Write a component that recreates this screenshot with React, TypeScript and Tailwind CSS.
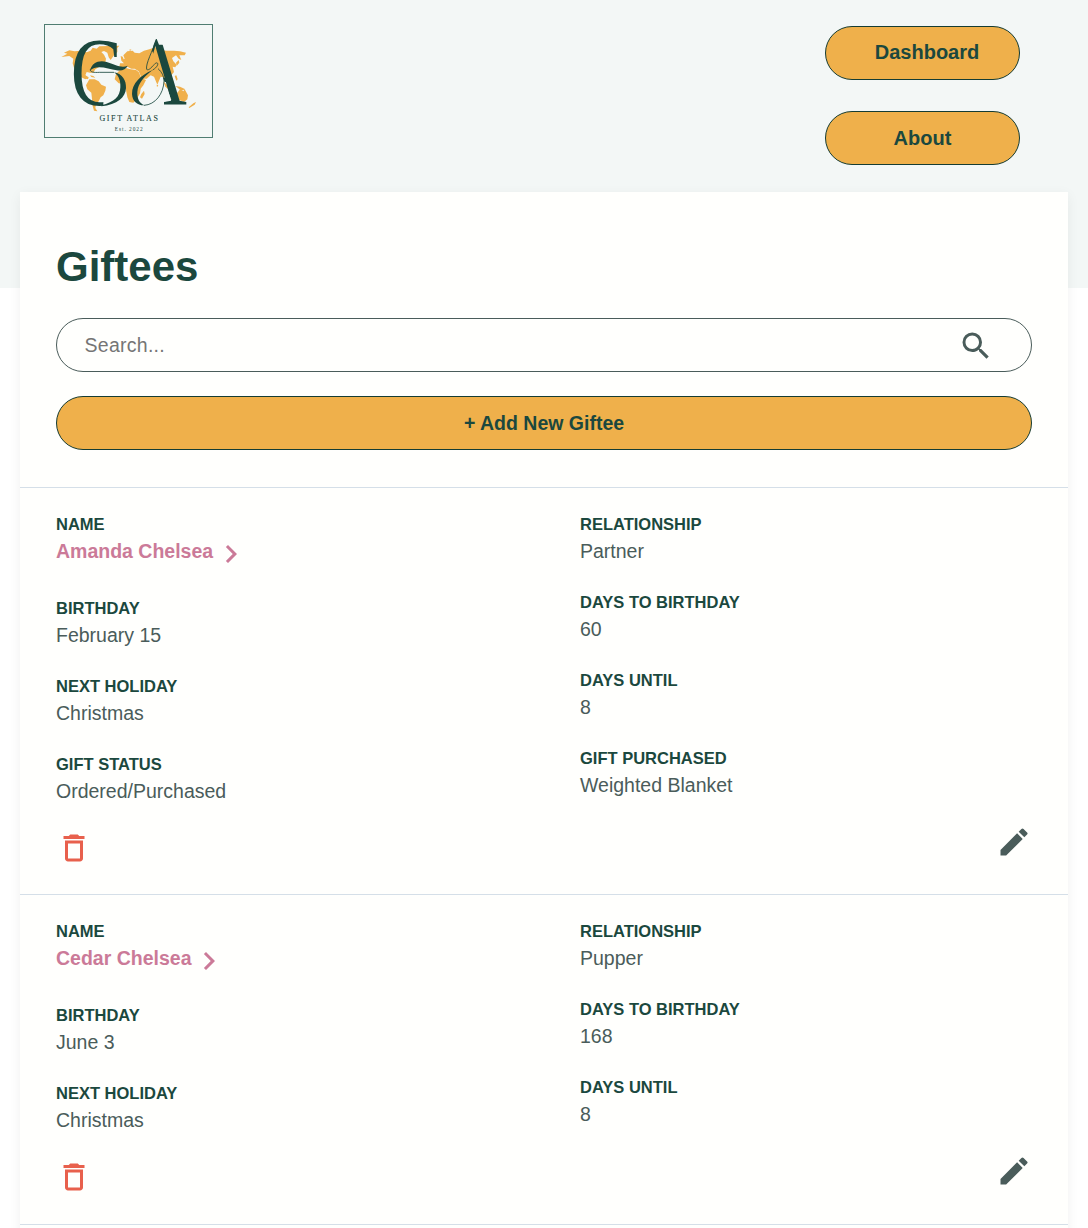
import type { ReactNode } from "react";
import { MdChevronRight, MdDeleteOutline, MdEdit, MdSearch } from "react-icons/md";

type Field = { label: string; value: string };
type Giftee = { name: string; left: Field[]; right: Field[] };

const giftees: Giftee[] = [
  {
    name: "Amanda Chelsea",
    left: [
      { label: "Birthday", value: "February 15" },
      { label: "Next Holiday", value: "Christmas" },
      { label: "Gift Status", value: "Ordered/Purchased" },
    ],
    right: [
      { label: "Relationship", value: "Partner" },
      { label: "Days to Birthday", value: "60" },
      { label: "Days Until", value: "8" },
      { label: "Gift Purchased", value: "Weighted Blanket" },
    ],
  },
  {
    name: "Cedar Chelsea",
    left: [
      { label: "Birthday", value: "June 3" },
      { label: "Next Holiday", value: "Christmas" },
    ],
    right: [
      { label: "Relationship", value: "Pupper" },
      { label: "Days to Birthday", value: "168" },
      { label: "Days Until", value: "8" },
    ],
  },
];

function Logo() {
  return (
    <svg className="h-[114px] w-[169px] overflow-visible" viewBox="12 12 507 342" role="img" aria-label="Gift Atlas">
      <defs>
        <clipPath id="bowl">
          <path d="M90 40 H246 V112 H190 V262 H90 Z" />
        </clipPath>
        <clipPath id="leg">
          <path d="M341 74 L349 54 L357 74 H460 V262 H370 V245 L394 240 L346 112 L336 92 Z" />
        </clipPath>
      </defs>
      <rect x="13.5" y="13.5" width="504" height="339" fill="none" stroke="#4f7d71" strokeWidth="3" />
      <g fill="#f0b04b">
        {/* North America and Greenland */}
        <path d="M64 111 L82 101 L72 98 L88 91 L104 94 L122 92 L140 97 L152 92 L158 83 L170 86 L178 79 L205 78 L238 77 L232 84 L232 96 L222 106 L212 120 L206 112 L202 98 L192 93 L184 96 L192 104 L198 116 L196 128 L186 132 L176 142 L166 148 L160 158 L150 158 L140 156 L136 166 L146 172 L144 178 L134 174 L122 166 L112 160 L103 146 L98 130 L100 116 L88 108 Z" />
        {/* South America */}
        <path d="M148 178 L164 178 L176 184 L184 194 L198 200 L196 212 L190 226 L182 232 L176 244 L168 252 L166 264 L172 274 L162 272 L158 258 L156 236 L154 218 L142 208 L138 196 Z" />
        <path d="M120 162 L136 166 L144 174 L136 178 L124 172 Z M150 166 l10 2 l6 5 l-12 -2 Z" />
        {/* Africa */}
        <path d="M240 150 L258 144 L272 148 L288 150 L296 156 L304 174 L318 180 L310 196 L302 206 L300 220 L290 238 L280 248 L268 246 L262 232 L258 210 L252 192 L236 190 L224 178 L228 162 Z M304 222 L312 212 L314 222 L306 236 L300 232 Z" />
        {/* Europe and Asia */}
        <path d="M238 142 L240 130 L252 130 L244 122 L254 116 L250 106 L262 94 L278 92 L284 98 L298 100 L312 92 L328 88 L346 82 L356 90 L380 92 L402 92 L420 94 L438 98 L434 106 L418 106 L424 120 L416 116 L408 106 L396 114 L400 124 L410 134 L406 142 L398 140 L402 156 L394 166 L384 168 L378 184 L370 172 L362 170 L352 194 L342 170 L332 166 L320 176 L306 176 L296 154 L284 146 L274 146 L262 140 L250 142 Z" />
        <path d="M242 108 l6 2 l4 10 l-8 2 Z M266 90 l8 -2 l-2 4 Z M350 194 l5 2 l-4 6 Z M408 128 l8 -8 l2 8 l-8 10 Z" />
        {/* Islands and Oceania */}
        <path d="M370 184 l14 14 l4 12 l-12 -10 Z M390 188 l10 -6 l2 10 l-8 10 Z M404 168 l5 -2 l4 12 l-4 4 Z M406 198 l14 2 l16 8 l-12 4 Z" />
        <path d="M394 222 L412 218 L420 208 L430 214 L434 208 L444 226 L442 238 L432 246 L418 240 L400 244 L392 236 Z M446 262 l14 -12 l8 -4 l-4 8 l-16 10 Z M386 212 l14 3 l-2 3 l-12 -4 Z" />
      </g>
      <g fill="#1b483e" fontFamily='"Liberation Serif", serif'>
        <g clipPath="url(#bowl)">
          <text x="0" y="0" fontSize="290" transform="translate(92 255) scale(0.78 1)">G</text>
        </g>
        <g clipPath="url(#leg)">
          <text x="0" y="0" fontSize="298" transform="translate(266 254) scale(0.81 1)">A</text>
        </g>
      </g>
      {/* Swashes that run through the monogram */}
      <g fill="#1b483e">
        <path d="M150 152 C156 128 176 120 200 126 C224 133 244 146 263 137 C258 148 246 154 230 151 C204 147 170 132 150 152 Z" />
        <path d="M222 157 C248 162 259 182 258 204 C257 232 232 254 184 259 L184 256 C224 246 240 230 241 202 C242 184 238 168 222 157 Z" />
        <path d="M338 150 C302 166 276 190 276 222 C277 244 292 257 314 256 C298 250 291 236 292 216 C294 190 312 170 338 150 Z" />
      </g>
      <g fill="none" stroke="#1b483e" strokeWidth="2.5">
        <path d="M151 148 C150 157 162 158 178 157 L222 157" />
        <path d="M349 60 C338 92 316 132 320 148 C326 154 338 138 346 130 C356 124 358 138 338 150 M312 256 C346 254 370 222 372 184 C372 170 366 156 354 146" />
      </g>
      <g fill="#1b483e" fontFamily='"Liberation Serif", serif' textAnchor="middle">
        <text x="266" y="302" fontSize="24" textLength="175" stroke="#1b483e" strokeWidth="0.3">GIFT ATLAS</text>
        <text x="266" y="334" fontSize="16" textLength="84">Est. 2022</text>
      </g>
    </svg>
  );
}

function NavButton({ children }: { children: ReactNode }) {
  return (
    <button className="flex h-[54px] w-[195px] items-center justify-center rounded-full border border-[#153c33] bg-[#efb04b] text-[20px] font-bold text-[#1b483e]">
      {children}
    </button>
  );
}

function Label({ children }: { children: ReactNode }) {
  return <div className="h-6 text-[16.5px] leading-6 font-bold text-[#1b483e] uppercase">{children}</div>;
}

function FieldItem({ label, value }: Field) {
  return (
    <div>
      <Label>{label}</Label>
      <div className="h-[30px] text-[19.5px] leading-[30px] text-[#4a5c5a]">{value}</div>
    </div>
  );
}

function GifteeRow({ giftee, last }: { giftee: Giftee; last: boolean }) {
  return (
    <section className={`grid grid-cols-2 border-t border-[#d5dfe8] pt-6 ${last ? "pb-[29px]" : "pb-7"}`}>
      <div className="flex flex-col gap-6 px-9">
        <div>
          <Label>Name</Label>
          <a className="flex h-9 items-start text-[19.5px] leading-[30px] font-bold text-[#cb7a98]">
            {giftee.name}
            <MdChevronRight size={36} />
          </a>
        </div>
        {giftee.left.map((f) => (
          <FieldItem key={f.label} {...f} />
        ))}
        <MdDeleteOutline size={36} color="#e8604c" />
      </div>
      <div className="flex flex-col gap-6 px-9">
        {giftee.right.map((f) => (
          <FieldItem key={f.label} {...f} />
        ))}
        <MdEdit size={36} color="#4a5c5a" className="self-end" />
      </div>
    </section>
  );
}

export default function App() {
  return (
    <div className="h-[1228px] overflow-hidden bg-white font-['Liberation_Sans',Arial,sans-serif]">
      <header className="flex h-[288px] items-start justify-between bg-[#f3f7f6] pr-[68px] pl-11">
        <div className="pt-6">
          <Logo />
        </div>
        <nav className="flex flex-col gap-[31px] pt-[26px]">
          <NavButton>
            <span className="pb-0.5 pl-[9px]">Dashboard</span>
          </NavButton>
          <NavButton>About</NavButton>
        </nav>
      </header>
      <main className="relative mx-5 -mt-24 min-h-[1100px] bg-[#fffffd] shadow-[0_3px_12px_rgba(0,0,0,0.06)]">
        <div className="px-9 pt-[45px] pb-[37px]">
          <h1 className="h-[60px] text-[42px] leading-[60px] font-bold text-[#1b483e]">Giftees</h1>
          <div className="mt-[21px] flex h-[54px] items-center justify-between rounded-full border border-[#4a5c5a] pr-[37px] pl-[27.5px]">
            <input
              className="w-96 bg-transparent pt-0.5 text-[19.5px] tracking-[0.27px] outline-none placeholder:text-[#757575]"
              placeholder="Search..."
            />
            <MdSearch size={36} color="#4a5c5a" className="mt-0.5" />
          </div>
          <button className="mt-6 flex h-[54px] w-full items-center justify-center rounded-full border border-[#153c33] bg-[#efb04b] pt-0.5 text-[19.5px] font-bold text-[#1b483e]">
            + Add New Giftee
          </button>
        </div>
        {giftees.map((g, i) => (
          <GifteeRow key={g.name} giftee={g} last={i === giftees.length - 1} />
        ))}
        <div className="border-t border-[#d5dfe8]" />
      </main>
    </div>
  );
}
